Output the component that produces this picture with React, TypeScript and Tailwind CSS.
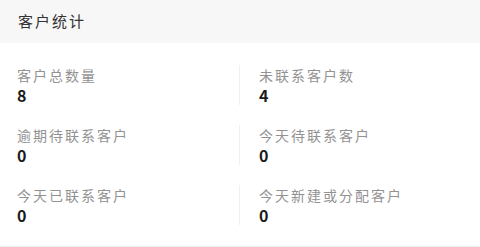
import React from "react";

const items = [
  ["客户总数量", "8"],
  ["未联系客户数", "4"],
  ["逾期待联系客户", "0"],
  ["今天待联系客户", "0"],
  ["今天已联系客户", "0"],
  ["今天新建或分配客户", "0"],
];

export default function App() {
  return (
    <div
      className="w-[480px] h-[247px] bg-white overflow-hidden"
      style={{ fontFamily: '"Noto Sans CJK SC", "Noto Sans", sans-serif' }}
    >
      <div className="h-[43px] bg-[#f7f7f7] flex items-center pl-[18px] text-[15px] tracking-[2px] text-[#333333]">
        客户统计
      </div>
      <div className="grid grid-cols-2 gap-y-[20px] pt-[22px] pb-[21px] border-b border-[#eeeeee]">
        {items.map(([label, value], i) => (
          <div
            key={label}
            className={
              i % 2 === 0
                ? "pl-[17px] h-[40px] flex flex-col"
                : "pl-[19px] h-[40px] flex flex-col border-l border-[#f0f0f0] -ml-px"
            }
          >
            <div className="text-[14px] leading-[20px] tracking-[2px] text-[#929292]">{label}</div>
            <div className="text-[16px] leading-[20px] font-bold text-[#1a1a1a] tracking-[1px]">{value}</div>
          </div>
        ))}
      </div>
    </div>
  );
}
